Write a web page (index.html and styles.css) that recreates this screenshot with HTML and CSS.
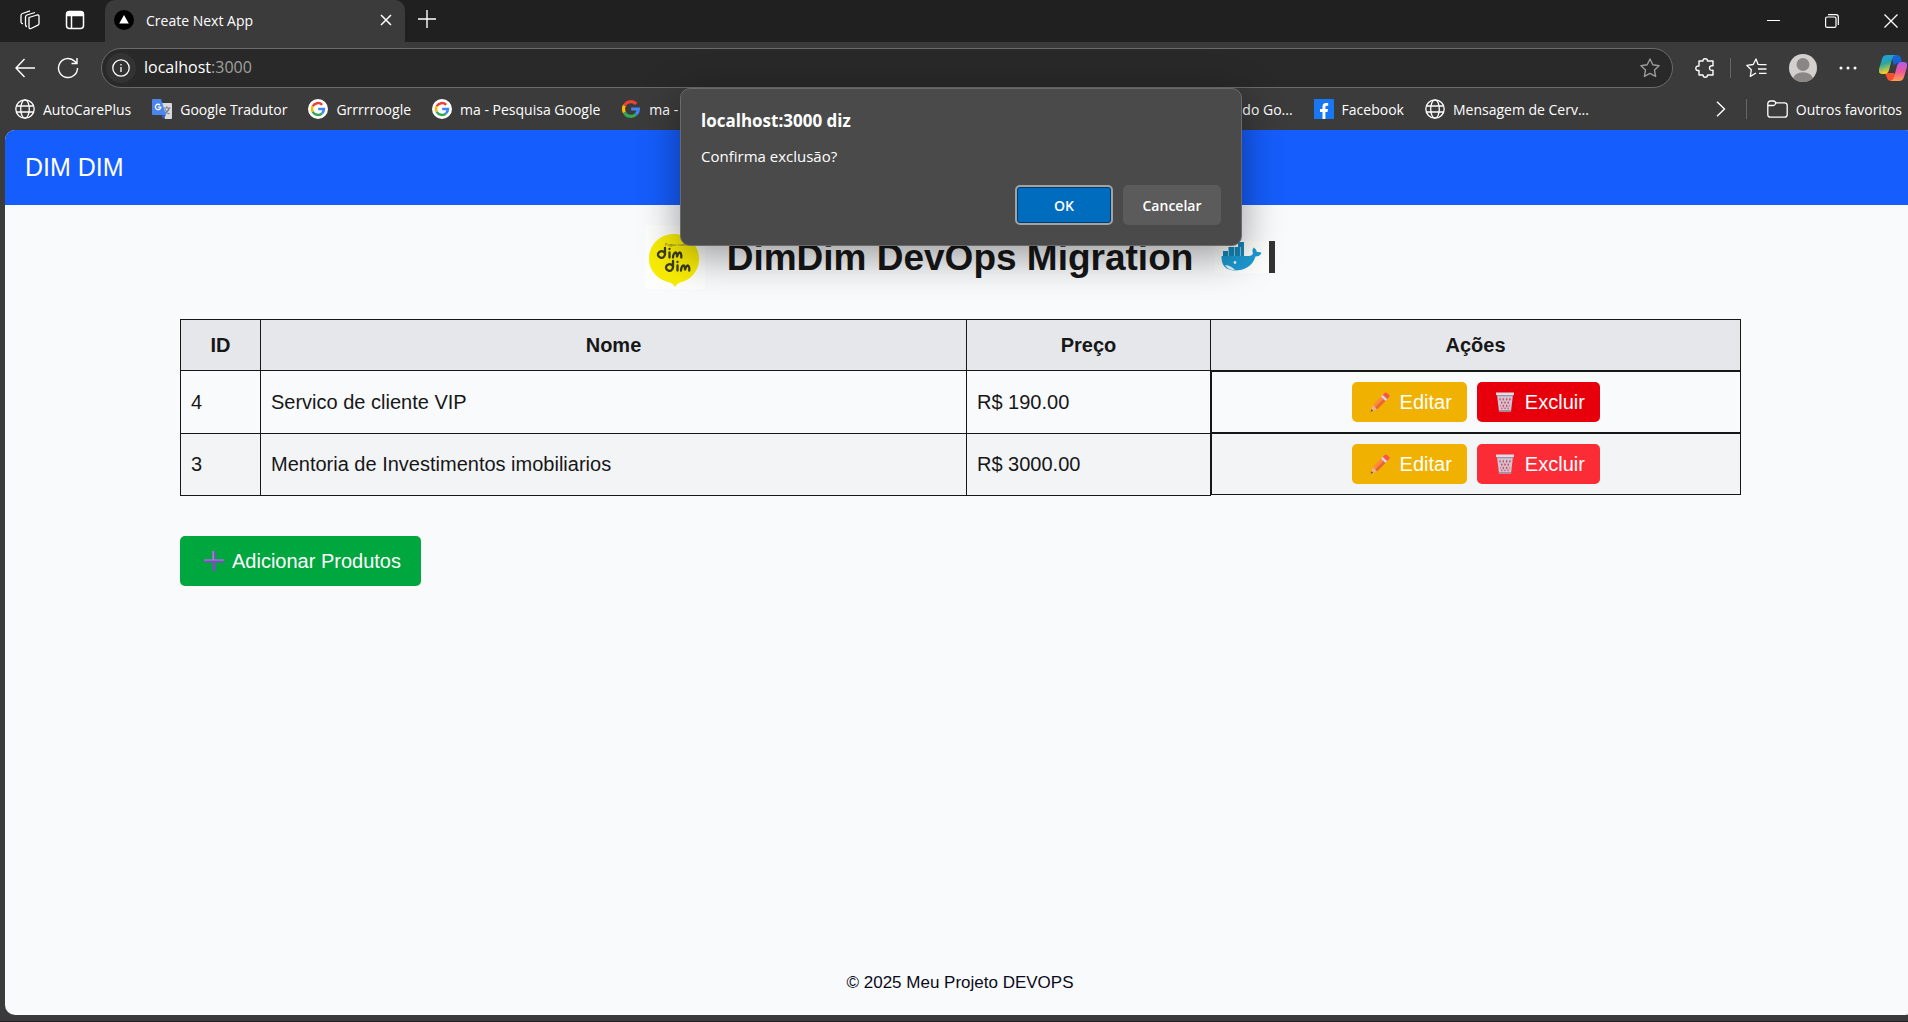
FILE: index.html
```html
<!DOCTYPE html>
<html lang="pt-BR">
<head>
<meta charset="utf-8">
<title>Create Next App</title>
<link rel="stylesheet" href="styles.css">
</head>
<body>
<svg class="defs" aria-hidden="true">
  <symbol id="globe" viewBox="0 0 20 20"><g fill="none" stroke="#fff" stroke-width="1.3"><circle cx="10" cy="10" r="9.2"/><ellipse cx="10" cy="10" rx="4.3" ry="9.2"/><path d="M1.5 7h17M1.5 13h17"/></g></symbol>
  <symbol id="g-logo" viewBox="0 0 20 20"><g fill="none" stroke-width="3.2"><path stroke="#ea4335" d="M3.4 6.6A7.4 7.4 0 0 1 15.2 4.8"/><path stroke="#fbbc05" d="M3.4 13.4A7.4 7.4 0 0 1 3.4 6.6"/><path stroke="#34a853" d="M15 15.4A7.4 7.4 0 0 1 3.4 13.4"/><path stroke="#4285f4" d="M10.2 10h7.2a7.4 7.4 0 0 1-2.4 5.4"/></g></symbol>
  <symbol id="pencil" viewBox="0 0 20 20"><path fill="#ff8a3d" d="M3 13 12 3.500l4.500 4.500L7 17.500z"/><path fill="#e8692e" d="M5 15.500 14.300 6l2.200 2L7 17.500z"/><path fill="#d9d3ea" d="M11 4.500 13 2.700 17.400 7l-2 2z"/><path fill="#f8554f" d="M12.800 2.900 15 .8q1-.8 2 .2L19.200 3q.9 1 0 2L17.200 7z"/><path fill="#e9b28f" d="M3 13l4 4.500L1 19.500z"/><path fill="#443" d="M1.700 17.300 3 18.800 .5 19.700z"/></symbol>
  <symbol id="trash" viewBox="0 0 20 20"><path fill="#cdc6d4" d="M2 2.500h16L16 19.500H4z"/><path fill="#e2dce8" d="M1 .5h18v2.600H1z"/><path fill="#9c93a6" d="M2 3h16v1.200H2zM4 18h12l-.3 1.600H4.300z"/><g fill="#e0405a"><path d="M5 5.700l.9 1.600L5.100 8.900l-.9-1.600zM8.300 5.700l.9 1.600-.9 1.600-.9-1.600zM11.700 5.700l.9 1.600-.9 1.600-.9-1.600zM15 5.700l.8 1.600-.9 1.600-.9-1.600zM6.800 9l.9 1.600-.9 1.600-.9-1.600zM10 9l.9 1.600-.9 1.600-.9-1.600zM13.200 9l.9 1.600-.9 1.600-.9-1.600zM8.300 12.300l.9 1.600-.9 1.600-.9-1.600zM11.700 12.300l.9 1.600-.9 1.600-.9-1.600zM5.400 12.300l.8 1.600-.6 1.300zM14.600 12.300l-.8 1.600.6 1.300zM6.900 15.200l.8 1.100-.8 1.100-.8-1.100zM10 15.200l.8 1.100-.8 1.100-.8-1.100zM13.100 15.200l.8 1.100-.8 1.100-.8-1.100z"/></g></symbol>
</svg>

<div class="browser">
  <div class="tab-strip">
    <div class="strip-tools">
      <button class="icon-btn" aria-label="Espaços de trabalho"><svg width="22" height="22" viewBox="0 0 22 22" fill="none" stroke="#fff" stroke-width="1.300" stroke-linejoin="round"><path d="M10 8.500 18 6q2-.5 2 1.500v7q0 1.300-1.500 1.900L12 19.500q-2 .8-2-1.500z"/><path d="M8 17.500q-1.500 0-1.500-2V8q0-1.500 1.500-2l8-2.500M4 14.500q-2 .3-2-2V6.500Q2 5 3.500 4.500L11 1.800"/></svg></button>
      <button class="icon-btn" aria-label="Guias verticais"><svg width="20" height="20" viewBox="0 0 20 20" fill="none" stroke="#fff" stroke-width="1.500"><rect x="1.500" y="1.500" width="17" height="17" rx="3"/><path fill="#fff" d="M2 5.500V4q0-2 2-2h12q2 0 2 2v1.500z"/><path d="M6.500 5v13"/></svg></button>
    </div>
    <div class="tab">
      <svg width="20" height="20" viewBox="0 0 20 20"><circle cx="10" cy="10" r="10" fill="#000"/><path fill="#fff" d="M10 5l4.800 8.500H5.200z"/></svg>
      <span class="tab-title">Create Next App</span>
      <button class="icon-btn" aria-label="Fechar guia"><svg width="12" height="12" viewBox="0 0 12 12" stroke="#fff" stroke-width="1.500"><path d="M1 1l10 10M11 1 1 11"/></svg></button>
    </div>
    <button class="icon-btn new-tab" aria-label="Nova guia"><svg width="18" height="18" viewBox="0 0 18 18" stroke="#fff" stroke-width="1.400"><path d="M9 0v18M0 9h18"/></svg></button>
    <div class="window-controls">
      <button class="icon-btn" aria-label="Minimizar"><svg width="13" height="14" viewBox="0 0 13 14"><path fill="#fff" d="M0 6h13v1H0z"/></svg></button>
      <button class="icon-btn" aria-label="Restaurar"><svg width="14" height="14" viewBox="0 0 14 14" fill="none" stroke="#fff" stroke-width="1.200"><rect x=".6" y="3" width="10.400" height="10.400" rx="1.500"/><path d="M3 .7h8q2.300 0 2.300 2.300v8"/></svg></button>
      <button class="icon-btn" aria-label="Fechar"><svg width="14" height="14" viewBox="0 0 14 14" stroke="#fff" stroke-width="1.300"><path d="M.5.5l13 13M13.500.5l-13 13"/></svg></button>
    </div>
  </div>

  <div class="toolbar">
    <button class="icon-btn" aria-label="Voltar"><svg width="20" height="20" viewBox="0 0 20 20" fill="none" stroke="#fff" stroke-width="1.400"><path d="M20 10H1M9.500 1 1 10l8.500 9"/></svg></button>
    <button class="icon-btn" aria-label="Atualizar"><svg width="22" height="22" viewBox="0 0 22 22" fill="none" stroke="#fff" stroke-width="1.400"><path d="M20.500 11a9.500 9.500 0 1 1-2.800-6.700L20 6.500M20 1v5.500h-5.500"/></svg></button>
    <div class="address">
      <span class="site-info"><svg width="18" height="18" viewBox="0 0 18 18" fill="none" stroke="#fff" stroke-width="1.300"><circle cx="9" cy="9" r="8.200"/><path d="M9 8v5M9 5v1.600"/></svg></span>
      <span class="url">localhost<span class="port">:3000</span></span>
      <button class="icon-btn" aria-label="Adicionar aos favoritos"><svg width="20" height="20" viewBox="0 0 20 20" fill="none" stroke="#9b9b9b" stroke-width="1.400" stroke-linejoin="round"><path d="M10 1l2.800 5.800 6.300.9-4.600 4.400 1.100 6.300-5.600-3-5.600 3 1.100-6.300L.9 7.700l6.300-.9z"/></svg></button>
    </div>
    <div class="toolbar-tools">
      <button class="icon-btn" aria-label="Extensões"><svg width="20" height="20" viewBox="0 0 20 20" fill="none" stroke="#fff" stroke-width="1.400" stroke-linejoin="round"><path d="M4 3h4q-.2-2.300 2.200-2.300T12.400 3H18v4.800q-3.500-.4-3.500 2.300t3.500 2.200V17h-5.500q0 2.300-2.200 2.300T8 17H4v-4.500q-3.200.3-3.200-2.200T4 8z"/></svg></button>
      <span class="divider"></span>
      <button class="icon-btn" aria-label="Favoritos"><svg width="21" height="20" viewBox="0 0 21 20" fill="none" stroke="#fff" stroke-width="1.300" stroke-linejoin="round"><path d="M15 6.700l-3-.4L10 1 7.200 6.500.8 7.400l4.500 4.400-1 6.600L10 15M13 6.700h7.500M12 11h8.500M13 15.300h7.500"/></svg></button>
      <button class="icon-btn" aria-label="Perfil"><svg width="28" height="28" viewBox="0 0 28 28"><clipPath id="av"><circle cx="14" cy="14" r="14"/></clipPath><g clip-path="url(#av)"><path fill="#d2d0ce" d="M0 0h28v28H0z"/><circle cx="14" cy="10.500" r="6.500" fill="#8a8683"/><ellipse cx="14" cy="25" rx="10" ry="6.800" fill="#8a8683"/></g></svg></button>
      <button class="icon-btn" aria-label="Configurações e mais"><svg width="18" height="4" viewBox="0 0 18 4" fill="#fff"><circle cx="2" cy="2" r="1.500"/><circle cx="9" cy="2" r="1.500"/><circle cx="16" cy="2" r="1.500"/></svg></button>
      <button class="icon-btn" aria-label="Copilot"><svg width="28" height="26" viewBox="0 0 28 26"><defs><linearGradient id="c1" x2=".3" y2="1"><stop stop-color="#1b9df5"/><stop offset=".5" stop-color="#2aa6a0"/><stop offset="1" stop-color="#ffd21f"/></linearGradient><linearGradient id="c2" x2="0" y2="1"><stop stop-color="#b05cf0"/><stop offset=".5" stop-color="#f0569a"/><stop offset="1" stop-color="#ffa04a"/></linearGradient></defs><path fill="#1763d6" d="M12 0h6q3 0 3.800 3L23 8h-4q-3 0-4 3z"/><path fill="#f4502e" d="M6 18h9l4 8h-7q-3 0-4-3z"/><path fill="url(#c1)" d="M8 0h9q-3 .5-4 4l-3 11q-1 4-5 4H3q-4 0-3-5L3 4q1-4 5-4z"/><path fill="url(#c2)" d="M20 26h-9q3-.5 4-4l3-11q1-4 5-4h2q4 0 3 5l-3 10q-1 4-5 4z"/></svg></button>
    </div>
  </div>

  <nav class="bookmarks" aria-label="Barra de favoritos">
    <a href="#"><svg width="20" height="20"><use href="#globe"/></svg>AutoCarePlus</a>
    <a href="#"><svg width="20" height="20" viewBox="0 0 20 20"><path fill="#d8dade" d="M8 4h11q1 0 1 1v14q0 1-1 1h-6z"/><path fill="none" stroke="#777f88" stroke-width="1.200" d="M11.500 9h7M15 7.500V9M17.200 9q-1 4-5 6M13 10.500q1.500 3 4.500 4.500"/><path fill="#4a86ee" d="M1 0h8l5 16H1q-1 0-1-1V1q0-1 1-1z"/><path fill="#3359c6" d="M9.500 16H14l-3 4z"/><path fill="none" stroke="#fff" stroke-width="1.300" d="M8 6a2.700 2.700 0 1 0 .8 2.200H6"/></svg>Google Tradutor</a>
    <a href="#"><span class="g-round"><svg width="16" height="16"><use href="#g-logo"/></svg></span>Grrrrroogle</a>
    <a href="#"><span class="g-round"><svg width="16" height="16"><use href="#g-logo"/></svg></span>ma - Pesquisa Google</a>
    <a href="#" class="covered"><svg width="20" height="20"><use href="#g-logo"/></svg>ma -</a>
    <a href="#">do Go...</a>
    <a href="#"><svg width="20" height="20" viewBox="0 0 20 20"><path fill="#1877f2" d="M0 0h20v20H0z"/><path fill="#fff" d="M8.500 20v-7H6v-3h2.500V7.500Q8.500 4 12 4h2.200v2.800h-1.500q-1.300 0-1.300 1.300V10H14l-.5 3h-2.100v7z"/></svg>Facebook</a>
    <a href="#"><svg width="20" height="20"><use href="#globe"/></svg>Mensagem de Cerv...</a>
    <div class="bookmarks-end">
      <button class="icon-btn" aria-label="Mais favoritos"><svg width="10" height="16" viewBox="0 0 10 16" fill="none" stroke="#fff" stroke-width="1.400"><path d="M1 .7 8.500 8 1 15.300"/></svg></button>
      <span class="divider"></span>
      <a href="#"><svg width="21" height="18" viewBox="0 0 21 18" fill="none" stroke="#fff" stroke-width="1.300"><path d="M.8 4q0-3 3-3h2.500Q7.500 1 8.300 2L9 2.800h8.500q2.700 0 2.700 2.700v9q0 2.700-2.700 2.700h-14Q.8 17.200.8 14.500zM.8 5.500h5.500q1 0 1.700-1L9 2.800"/></svg>Outros favoritos</a>
    </div>
  </nav>

  <div class="page">
    <header class="navbar"><a href="#">DIM DIM</a></header>
    <main class="content">
      <div class="hero">
        <svg width="60" height="64" viewBox="0 0 60 64" role="img" aria-label="Dim Dim"><path fill="#fdfdfc" d="M0 0h60v64H0z"/><path fill="#f8ec04" d="M29 9c14 0 25 10.500 25 25 0 12-8 21-19 23.500q-3 .8-5 4.500-2-3.700-5-4.500C13 55 4 46 4 34 4 19.500 15 9 29 9z"/><text x="20" y="21" font-family="Open Sans" font-size="4" fill="#555">Pague com</text><g fill="none" stroke="#3c3b24" stroke-width="2.300" stroke-linecap="round" stroke-linejoin="round"><path id="dim" d="M20 23v6.500a3.500 3.300 0 1 0-1.500 2.700Q20 31 20 29M24.500 27.500v5M24.500 24v.1M28 32.500q.2-4 2.200-5 1.800 0 1.800 4 1.500-4 3-4 1.500.5 1.300 5"/><use href="#dim" x="8" y="13"/></g></svg>
        <h1>DimDim DevOps Migration</h1>
        <svg width="60" height="32" viewBox="0 0 60 32" role="img" aria-label="Docker"><path fill="#fdfdfc" d="M0 0h54v32H0z"/><path fill="#333" d="M54 0h6v32h-6z"/><path fill="#1d9bd3" d="M6.500 15H34q3.500-.3 4-3-1.500-3 .8-5.500 2.700 1.700 3.200 4.500 3-.5 4.500 1-1.500 3.500-6 3.500Q36 29.500 19 29.500 6 28.500 6.500 15z"/><path fill="#1387b8" d="M8 10h5v5H8zM13.500 6H19v9h-5.500zM19.500 6H25v9h-5.500zM25.500 6H29v9h-3.500zM23 1h6v5h-6z"/><path fill="#e6f4fa" d="M10 24q6 .5 10 5-7 .5-10-5z"/><circle cx="20" cy="21.500" r="1.400" fill="#e6f4fa"/></svg>
      </div>
      <table class="products">
        <colgroup><col class="c-id"><col class="c-name"><col class="c-price"><col class="c-actions"></colgroup>
        <thead><tr><th>ID</th><th>Nome</th><th>Preço</th><th>Ações</th></tr></thead>
        <tbody>
          <tr><td>4</td><td>Servico de cliente VIP</td><td>R$ 190.00</td><td class="actions"><button class="btn edit"><svg width="20" height="20"><use href="#pencil"/></svg>Editar</button><button class="btn delete active"><svg width="20" height="20"><use href="#trash"/></svg>Excluir</button></td></tr>
          <tr><td>3</td><td>Mentoria de Investimentos imobiliarios</td><td>R$ 3000.00</td><td class="actions"><button class="btn edit"><svg width="20" height="20"><use href="#pencil"/></svg>Editar</button><button class="btn delete"><svg width="20" height="20"><use href="#trash"/></svg>Excluir</button></td></tr>
        </tbody>
      </table>
      <button class="btn add"><svg width="20" height="20" viewBox="0 0 20 20"><path fill="#7a50bd" d="M8.500 0h3v8.500H20v3h-8.500V20h-3v-8.500H0v-3h8.500z"/><path fill="#a583dd" d="M8.500 0H10v8.500H8.500zM0 8.500h20v1H0z"/></svg>Adicionar Produtos</button>
    </main>
    <footer class="footer">© 2025 Meu Projeto DEVOPS</footer>
  </div>

  <div class="dialog" role="dialog" aria-labelledby="dlg-title">
    <h2 id="dlg-title">localhost:3000 diz</h2>
    <p>Confirma exclusão?</p>
    <div class="dialog-actions"><button class="ok">OK</button><button>Cancelar</button></div>
  </div>
</div>
</body>
</html>
```
FILE: styles.css
```css
* { box-sizing: border-box; }
body { margin: 0; background: #3b3b3b; color: #171717; font-family: "Liberation Sans", Arial, sans-serif; }
button { font: inherit; color: inherit; border: 0; padding: 0; background: none; }
a { color: inherit; text-decoration: none; }
svg { display: block; flex: none; }
.defs { position: absolute; width: 0; height: 0; }
.icon-btn { display: flex; align-items: center; justify-content: center; flex: none; }

.browser {
  position: relative;
  display: flex;
  flex-direction: column;
  min-height: 100vh;
  overflow: hidden;
  padding-bottom: 6px;
  border-bottom: 1px solid #241f28;
}
.tab-strip, .toolbar, .bookmarks, .dialog { font-family: "Open Sans", sans-serif; font-size: 14px; color: #fff; }

.tab-strip { display: flex; height: 42px; background: #202020; }
.strip-tools { display: flex; align-items: center; gap: 24px; width: 105px; padding: 0 0 2px 19px; }
.tab { display: flex; align-items: center; gap: 12px; width: 300px; padding: 0 13px 2px 9px; background: #3b3b3b; border-radius: 10px 10px 0 0; }
.tab-title { flex: 1; }
.new-tab { width: 44px; padding-bottom: 4px; }
.window-controls { display: flex; align-items: center; gap: 45px; margin-left: auto; padding-right: 10px; }

.toolbar { display: flex; align-items: center; gap: 22px; height: 52px; padding-left: 15px; }
.address { display: flex; flex: 1; align-items: center; height: 40px; padding: 0 12px 0 4px; border: 1px solid #6b6b6b; border-radius: 20px; background: #292929; }
.site-info { display: grid; place-items: center; width: 30px; height: 30px; border-radius: 15px; background: #333; }
.url { flex: 1; margin-left: 8px; padding-bottom: 2px; font-size: 16px; }
.port { color: #a0a0a0; }
.toolbar-tools { display: flex; align-items: center; gap: 22px; padding-right: 1px; }
.divider { width: 1px; height: 20px; background: #666; }
.toolbar-tools .divider { margin: 0 -7px; }

.bookmarks { display: flex; align-items: center; height: 36px; padding: 0 6px 6px 15px; gap: 21px; white-space: nowrap; }
.bookmarks a { display: flex; align-items: center; flex: none; gap: 8px; }
.g-round { display: grid; place-items: center; width: 20px; height: 20px; border-radius: 10px; background: #fff; }
.bookmarks .covered { width: 600px; }
.bookmarks-end { display: flex; align-items: center; gap: 20px; margin-left: auto; }

.page { display: flex; flex: 1; flex-direction: column; margin: 0 -7px 0 5px; border-radius: 10px; overflow: hidden; background: #f9fafc; }
.navbar { height: 75px; padding: 20px; background: #155dfc; color: #fff; font-size: 25px; line-height: 35px; }
.content { flex: 1; width: 82%; max-width: 1560px; margin: 0 auto; padding-top: 20px; font-size: 20px; line-height: 30px; }
.hero { display: flex; align-items: center; justify-content: center; gap: 22px; margin-bottom: 30px; }
h1 { margin: 0; font-size: 37px; line-height: 45px; }

.products { width: 100%; border-collapse: collapse; table-layout: fixed; }
.c-id { width: 80px; }
.c-name { width: 706px; }
.c-price { width: 244px; }
.c-actions { width: 530px; }
th, td { padding: 10px; border: 1px solid #171717; text-align: left; }
th { background: #e5e7eb; text-align: center; }
tbody tr:nth-child(even) { background: #f3f4f6; }
.actions { display: flex; justify-content: center; gap: 10px; }
.btn { display: flex; align-items: center; gap: 10px; height: 40px; padding: 0 15px 0 18px; border-radius: 5px; color: #fff; }
.edit { background: #f0b100; }
.delete { background: #fb2c36; }
.delete.active { background: #e7000b; }
.add { height: 50px; margin-top: 40px; padding: 0 20px 0 24px; gap: 8px; background: #00a63e; }
.footer { padding: 20px; text-align: center; font-size: 17px; line-height: 25px; color: #0a0a1a; }

.dialog {
  position: absolute;
  top: 88px;
  left: 680px;
  width: 562px;
  padding: 20px;
  border: 1px solid #6a6a6a;
  border-radius: 10px;
  background: #4a4a4a;
  box-shadow: 0 10px 40px rgba(0, 0, 0, .4);
}
.dialog h2 { margin: 0; font-size: 17px; line-height: 24px; }
.dialog p { margin: 13px 0 19px; font-size: 15px; line-height: 20px; }
.dialog-actions { display: flex; justify-content: flex-end; gap: 10px; }
.dialog-actions button { width: 98px; height: 40px; border-radius: 5px; background: #5b5b5b; font-weight: 600; }
.dialog-actions .ok { border: 2px solid #a3a3a3; background: #006cbe; box-shadow: inset 0 0 0 1px #003e73; }
```
